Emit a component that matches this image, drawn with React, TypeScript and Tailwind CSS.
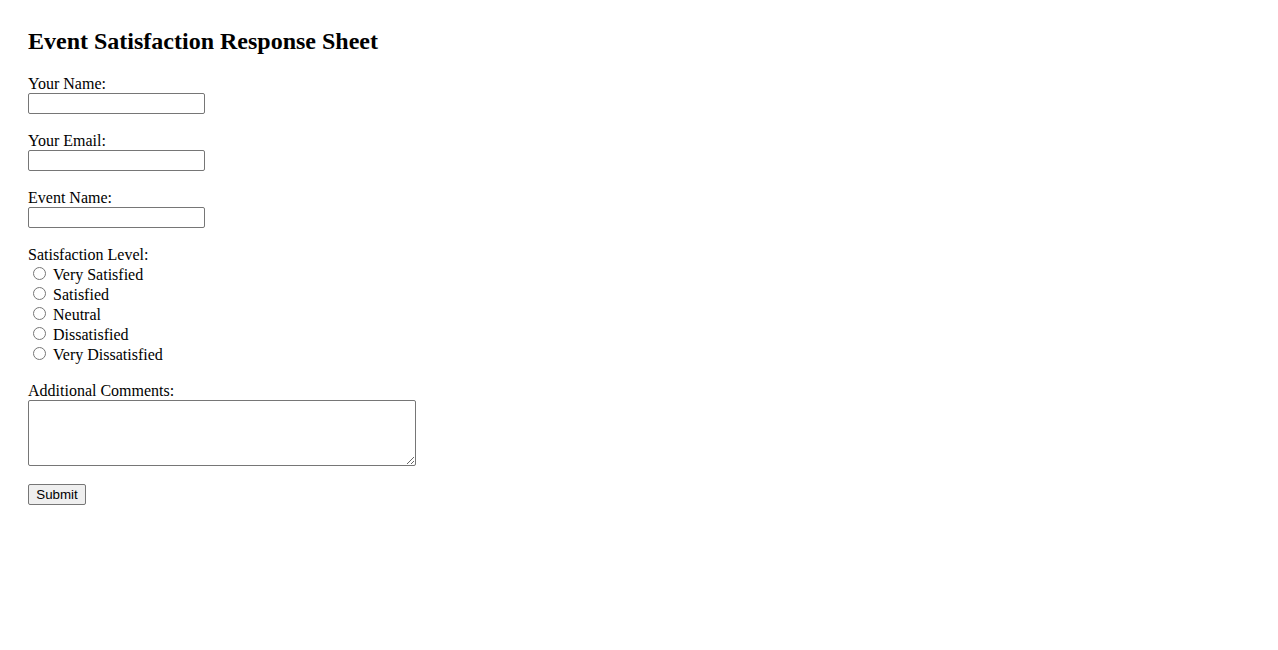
import React from 'react'

const fields = ['Your Name:', 'Your Email:', 'Event Name:']
const levels = ['Very Satisfied', 'Satisfied', 'Neutral', 'Dissatisfied', 'Very Dissatisfied']

export default function App() {
  return (
    <div className="min-h-screen bg-white text-black font-['Liberation_Serif','Times_New_Roman',serif] text-[16px] pt-[28px] px-[28px]">
      <h2 className="text-[24px] font-bold leading-[27px] mb-[20px]">Event Satisfaction Response Sheet</h2>

      <form onSubmit={(e) => e.preventDefault()}>
        {/* Text fields */}
        {fields.map((label) => (
          <div key={label} className="mb-[18px]">
            <label className="block leading-[18px]">{label}</label>
            <input
              type="text"
              className="block w-[177px] h-[21px] border border-[#767676] rounded-[2px] px-[2px] py-[1px] text-[13.33px] font-['Liberation_Sans',Arial,sans-serif] outline-none"
            />
          </div>
        ))}

        {/* Satisfaction level */}
        <div className="mb-[18px]">
          <div className="leading-[18px]">Satisfaction Level:</div>
          {levels.map((level) => (
            <label key={level} className="flex items-start h-[20px] leading-[20px]">
              <input
                type="radio"
                name="satisfaction"
                value={level}
                className="w-[13px] h-[13px] ml-[5px] mr-[7px] mt-[3px] accent-[#767676]"
              />
              <span className="pt-[1px]">{level}</span>
            </label>
          ))}
        </div>

        {/* Comments */}
        <div className="mb-[18px]">
          <label className="block leading-[18px]">Additional Comments:</label>
          <textarea className="block w-[388px] h-[66px] border border-[#767676] rounded-[2px] p-[2px] text-[13.33px] font-['Liberation_Mono',monospace] outline-none" />
        </div>

        <button
          type="submit"
          className="flex items-center justify-center w-[58px] h-[21px] bg-[#efefef] border border-[#767676] rounded-[2px] text-[13.33px] font-['Liberation_Sans',Arial,sans-serif]"
        >
          Submit
        </button>
      </form>
    </div>
  )
}
